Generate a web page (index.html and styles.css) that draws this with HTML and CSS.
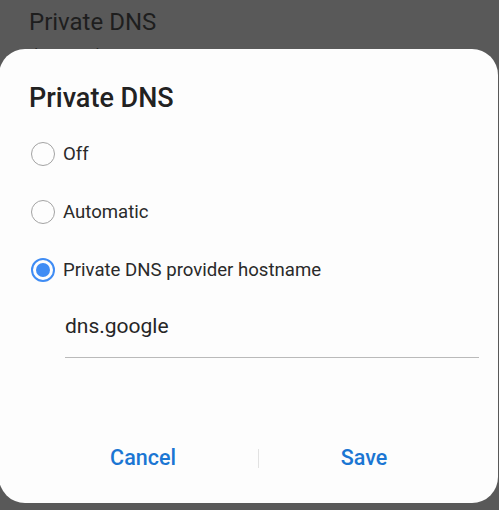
FILE: index.html
```html
<!DOCTYPE html>
<html lang="en">
<head>
<meta charset="utf-8">
<title>Private DNS</title>
<link rel="stylesheet" href="styles.css">
</head>
<body>
<div class="page">
  <div class="page-title">Private DNS</div>
  <div class="page-sub">dns.google</div>
</div>
<div class="dialog">
  <div class="dialog-title">Private DNS</div>
  <div class="options">
    <div class="option"><span class="radio"></span><span class="label">Off</span></div>
    <div class="option"><span class="radio"></span><span class="label">Automatic</span></div>
    <div class="option"><span class="radio checked"></span><span class="label">Private DNS provider hostname</span></div>
  </div>
  <div class="field"><span class="field-text">dns.google</span></div>
  <div class="actions">
    <div class="btn btn-cancel">Cancel</div>
    <div class="divider"></div>
    <div class="btn btn-save">Save</div>
  </div>
</div>
</body>
</html>
```
FILE: styles.css
```css
html, body {
  margin: 0;
  padding: 0;
}
body {
  width: 499px;
  height: 510px;
  overflow: hidden;
  background: #595959;
  font-family: Roboto, "Liberation Sans", sans-serif;
  position: relative;
}
.page {
  padding: 6px 29px 0;
}
.page-title {
  font-size: 24px;
  line-height: 32px;
  color: #1e1e1e;
}
.page-sub {
  font-size: 16px;
  line-height: 20px;
  margin-top: 7px;
  color: #2a2a2a;
}
.dialog {
  position: absolute;
  left: -1px;
  top: 49px;
  width: 499px;
  height: 454px;
  box-sizing: border-box;
  background: #fdfdfd;
  border-radius: 26px;
  padding: 33px 29px 0 29px;
  display: flex;
  flex-direction: column;
}
.dialog-title {
  font-size: 27px;
  line-height: 32px;
  font-weight: 500;
  color: #222;
  padding-left: 1px;
}
.options {
  margin-top: 11px;
  display: flex;
  flex-direction: column;
}
.option {
  height: 58px;
  display: flex;
  align-items: center;
  gap: 8px;
  padding-left: 3px;
}
.radio {
  width: 24px;
  height: 24px;
  box-sizing: border-box;
  border-radius: 50%;
  border: 1.5px solid #a3a3a3;
  flex: none;
  position: relative;
}
.radio.checked {
  border: 2px solid #3f8cf4;
}
.radio.checked::after {
  content: "";
  position: absolute;
  left: 3px;
  top: 3px;
  width: 14px;
  height: 14px;
  border-radius: 50%;
  background: #3f8cf4;
}
.label {
  font-size: 18.6px;
  line-height: 58px;
  color: #2a2a2a;
}
.field {
  margin-top: 15px;
  margin-left: 37px;
  width: 414px;
  padding-bottom: 19px;
  border-bottom: 1px solid #bababa;
}
.field-text {
  display: block;
  font-size: 21px;
  line-height: 24px;
  color: #262626;
}
.actions {
  margin-top: auto;
  margin-bottom: 17px;
  height: 56px;
  display: flex;
  align-items: center;
}
.btn {
  text-align: center;
  font-size: 21.5px;
  line-height: 56px;
  font-weight: 500;
  color: #1b76d3;
}
.btn-cancel {
  width: 230px;
}
.btn-save {
  width: 210px;
}
.divider {
  width: 1px;
  height: 19px;
  background: #e2e2e2;
}
```
